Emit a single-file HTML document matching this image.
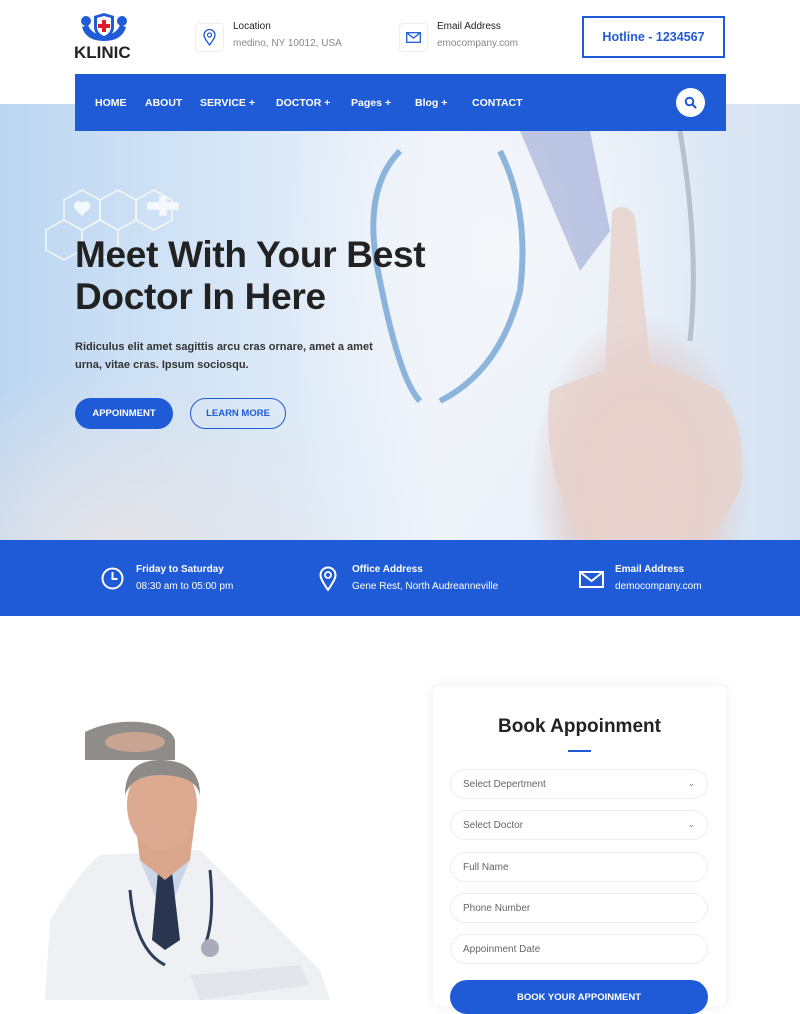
<!DOCTYPE html>
<html><head><meta charset="utf-8"><style>
*{margin:0;padding:0;box-sizing:border-box}
body{width:800px;height:1000px;overflow:hidden;background:#fff;font-family:"Liberation Sans",sans-serif;position:relative}
.abs{position:absolute}
.hero{left:0;top:104px;width:800px;height:436px;background:
radial-gradient(ellipse 110px 170px at 640px 380px,#ead8d4 0%,#dfcac8 55%,rgba(225,205,205,0) 100%),
radial-gradient(ellipse 220px 300px at 500px 150px,#f4f6fa 0%,rgba(240,244,250,0) 100%),
radial-gradient(ellipse 260px 200px at 120px 460px,#e8e4e6 0%,rgba(230,230,235,0) 100%),
linear-gradient(90deg,#bcd6f1 0%,#d8e7f7 30%,#eef3fa 55%,#e6eef8 75%,#d4e2f2 100%)}
.nav{left:75px;top:74px;width:651px;height:57px;background:#1f5bd6}
.nav span{position:absolute;top:23px;color:#fff;font-size:10.5px;font-weight:bold}
.info{left:0;top:540px;width:800px;height:76px;background:#1f5bd6;color:#fff}
.info b{position:absolute;font-size:10px}
.info i{position:absolute;font-style:normal;font-size:10px}
.field{position:absolute;left:450px;width:258px;height:30px;border:1px solid #eee;border-radius:15px;font-size:10px;color:#666;padding:9px 0 0 12px}
</style></head><body>
<svg class="abs" style="left:80px;top:13px" width="48" height="30" viewBox="0 0 48 30">
<circle cx="6" cy="8" r="5" fill="#1f5bd6"/><circle cx="42" cy="8" r="5" fill="#1f5bd6"/>
<path d="M2 14 Q6 28 24 28 Q42 28 46 14 L40 12 Q36 22 24 22 Q12 22 8 12Z" fill="#1f5bd6"/>
<path d="M14 3 L24 0 L34 3 L34 14 Q34 22 24 26 Q14 22 14 14Z" fill="#1f5bd6"/>
<path d="M17 5 L24 3 L31 5 L31 14 Q31 20 24 23 Q17 20 17 14Z" fill="#fff"/>
<rect x="22" y="7" width="4" height="12" fill="#e21b2a"/><rect x="18" y="11" width="12" height="4" fill="#e21b2a"/></svg>
<div class="abs" style="left:74px;top:43px;font-size:17px;font-weight:bold;color:#222">KLINIC</div>
<div class="abs" style="left:195px;top:23px;width:29px;height:29px;border:1px solid #eee;border-radius:4px"></div>
<svg class="abs" style="left:203px;top:29px" width="13" height="17" viewBox="0 0 13 17"><path d="M6.5 16 C2 10 1 8 1 6 A5.5 5.5 0 0 1 12 6 C12 8 11 10 6.5 16Z" fill="none" stroke="#1f5bd6" stroke-width="1.3"/><circle cx="6.5" cy="6" r="2" fill="none" stroke="#1f5bd6" stroke-width="1.2"/></svg>
<div class="abs" style="left:233px;top:21px;font-size:10px;color:#222">Location</div>
<div class="abs" style="left:233px;top:38px;font-size:10px;color:#888">medino, NY 10012, USA</div>
<div class="abs" style="left:399px;top:23px;width:29px;height:29px;border:1px solid #eee;border-radius:4px"></div>
<svg class="abs" style="left:406px;top:32px" width="15" height="11"><rect x="0.7" y="0.7" width="13.6" height="9.6" fill="none" stroke="#1f5bd6" stroke-width="1.3"/><path d="M1 1 L7.5 6 L14 1" fill="none" stroke="#1f5bd6" stroke-width="1.3"/></svg>
<div class="abs" style="left:437px;top:21px;font-size:10px;color:#222">Email Address</div>
<div class="abs" style="left:437px;top:38px;font-size:10px;color:#888">emocompany.com</div>
<div class="abs" style="left:582px;top:16px;width:143px;height:42px;border:2px solid #1f5bd6;color:#1f5bd6;font-weight:bold;font-size:12.5px;text-align:center;line-height:38px">Hotline - 1234567</div>
<div class="abs hero"></div>
<svg class="abs" style="left:350px;top:131px" width="400" height="409" fill="none">
<path d="M50 20 Q10 60 30 150 Q50 250 70 270 M150 20 Q180 80 170 160 Q150 240 90 270" stroke="#4a8bc8" stroke-width="6" opacity=".6"/>
<path d="M170 0 L230 140 L260 100 L240 0Z" fill="#7f8fc8" opacity=".45"/>
<path d="M330 0 Q350 120 340 210" stroke="#8899aa" stroke-width="5" opacity=".5"/>
<path d="M262 80 Q275 70 285 85 L300 230 Q330 240 370 260 Q400 300 390 360 L360 409 L230 409 Q190 330 200 260 Q220 250 255 240Z" fill="#e8d2cc" opacity=".85"/>
</svg>
<svg class="abs" style="left:30px;top:185px;opacity:.8" width="260" height="180" stroke="#fff" fill="none" stroke-width="1.5">
<polygon points="52,5 70,15 70,35 52,45 34,35 34,15"/><polygon points="88,5 106,15 106,35 88,45 70,35 70,15"/><polygon points="124,5 142,15 142,35 124,45 106,35 106,15"/>
<polygon points="34,35 52,45 52,65 34,75 16,65 16,45"/><polygon points="70,35 88,45 88,65 70,75 52,65 52,45"/>
<path d="M118 18h12v-6h6v6h12v6h-12v6h-6v-6h-12z" fill="#fff"/><path d="M52 30 l-7 -7 a4 4 0 0 1 7 -4 a4 4 0 0 1 7 4z" fill="#fff"/></svg>
<div class="abs nav">
<span style="left:20px">HOME</span><span style="left:70px">ABOUT</span><span style="left:125px">SERVICE +</span><span style="left:201px">DOCTOR +</span><span style="left:276px">Pages +</span><span style="left:340px">Blog +</span><span style="left:397px">CONTACT</span>
<div class="abs" style="left:601px;top:14px;width:29px;height:29px;border-radius:50%;background:#fff"></div>
<svg class="abs" style="left:609px;top:22px" width="13" height="13"><circle cx="5.5" cy="5.5" r="3.8" fill="none" stroke="#1f5bd6" stroke-width="2"/><path d="M8.5 8.5 L12 12" stroke="#1f5bd6" stroke-width="2.2"/></svg>
</div>
<div class="abs" style="left:75px;top:234px;font-size:37px;font-weight:bold;color:#222;line-height:42px;letter-spacing:-.3px">Meet With Your Best<br>Doctor In Here</div>
<div class="abs" style="left:75px;top:338px;font-size:11px;color:#333;line-height:18px;font-weight:bold">Ridiculus elit amet sagittis arcu cras ornare, amet a amet<br>urna, vitae cras. Ipsum sociosqu.</div>
<div class="abs" style="left:75px;top:398px;width:98px;height:31px;border-radius:16px;background:#1f5bd6;color:#fff;font-size:9.5px;font-weight:bold;text-align:center;line-height:31px">APPOINMENT</div>
<div class="abs" style="left:190px;top:398px;width:96px;height:31px;border-radius:16px;border:1px solid #1f5bd6;color:#1f5bd6;font-size:9.5px;font-weight:bold;text-align:center;line-height:29px">LEARN MORE</div>
<div class="abs info">
<svg class="abs" style="left:101px;top:27px" width="23" height="23"><circle cx="11.5" cy="11.5" r="10" fill="none" stroke="#fff" stroke-width="2"/><path d="M11.5 5v7h5" fill="none" stroke="#fff" stroke-width="2"/></svg>
<b style="left:136px;top:24px">Friday to Saturday</b><i style="left:136px;top:41px">08:30 am to 05:00 pm</i>
<svg class="abs" style="left:319px;top:26px" width="18" height="25"><path d="M9 24 C3 15 1.5 12 1.5 9 A7.5 7.5 0 0 1 16.5 9 C16.5 12 15 15 9 24Z" fill="none" stroke="#fff" stroke-width="2"/><circle cx="9" cy="9" r="3" fill="none" stroke="#fff" stroke-width="1.8"/></svg>
<b style="left:352px;top:24px">Office Address</b><i style="left:352px;top:41px">Gene Rest, North Audreanneville</i>
<svg class="abs" style="left:579px;top:31px" width="25" height="17"><rect x="1" y="1" width="23" height="15" fill="none" stroke="#fff" stroke-width="2"/><path d="M1 1 L12.5 10 L24 1" fill="none" stroke="#fff" stroke-width="2"/></svg>
<b style="left:615px;top:24px">Email Address</b><i style="left:615px;top:41px">democompany.com</i>
</div>
<svg class="abs" style="left:40px;top:720px" width="300" height="280">
<path d="M60 135 Q40 150 10 200 L5 280 L290 280 L280 250 Q230 200 200 170 L160 130 Z" fill="#eef0f4"/>
<path d="M100 140 L125 200 L150 140 Z" fill="#c9d6e8"/>
<path d="M118 152 L132 152 L140 220 L125 230 L112 220Z" fill="#2a3550"/>
<path d="M95 100 L155 100 L150 140 L125 160 L100 140Z" fill="#d9a68c"/>
<ellipse cx="122" cy="85" rx="35" ry="45" fill="#dcaa90"/>
<path d="M85 75 Q85 40 120 40 Q160 40 160 75 Q155 55 120 55 Q92 55 85 75Z" fill="#8d8a88"/>
<path d="M45 12 Q70 0 100 2 Q130 5 135 20 L135 40 L45 40Z" fill="#8f8c8a"/>
<ellipse cx="95" cy="22" rx="30" ry="10" fill="#c7a592"/>
<path d="M90 170 Q95 230 125 245 M170 150 Q175 200 165 225" fill="none" stroke="#2c3e58" stroke-width="3"/>
<circle cx="170" cy="228" r="9" fill="#aab"/>
<path d="M150 255 L260 245 L270 265 L160 280Z" fill="#e2e5ea"/>
</svg>
<div class="abs" style="left:433px;top:686px;width:293px;height:320px;background:#fff;border-radius:6px;box-shadow:0 0 12px rgba(0,0,0,.08)"></div>
<div class="abs" style="left:433px;top:716px;width:293px;text-align:center;font-size:19px;font-weight:bold;color:#222">Book Appoinment</div>
<div class="abs" style="left:568px;top:750px;width:23px;height:2px;background:#1f5bd6"></div>
<div class="field" style="top:769px">Select Depertment<span style="position:absolute;right:12px;top:8px;font-size:9px;color:#777">&#8964;</span></div>
<div class="field" style="top:810px">Select Doctor<span style="position:absolute;right:12px;top:8px;font-size:9px;color:#777">&#8964;</span></div>
<div class="field" style="top:852px">Full Name</div>
<div class="field" style="top:893px">Phone Number</div>
<div class="field" style="top:934px">Appoinment Date</div>
<div class="abs" style="left:450px;top:980px;width:258px;height:34px;border-radius:17px;background:#1f5bd6;color:#fff;font-size:9.5px;font-weight:bold;text-align:center;padding-top:12px">BOOK YOUR APPOINMENT</div>
</body></html>
